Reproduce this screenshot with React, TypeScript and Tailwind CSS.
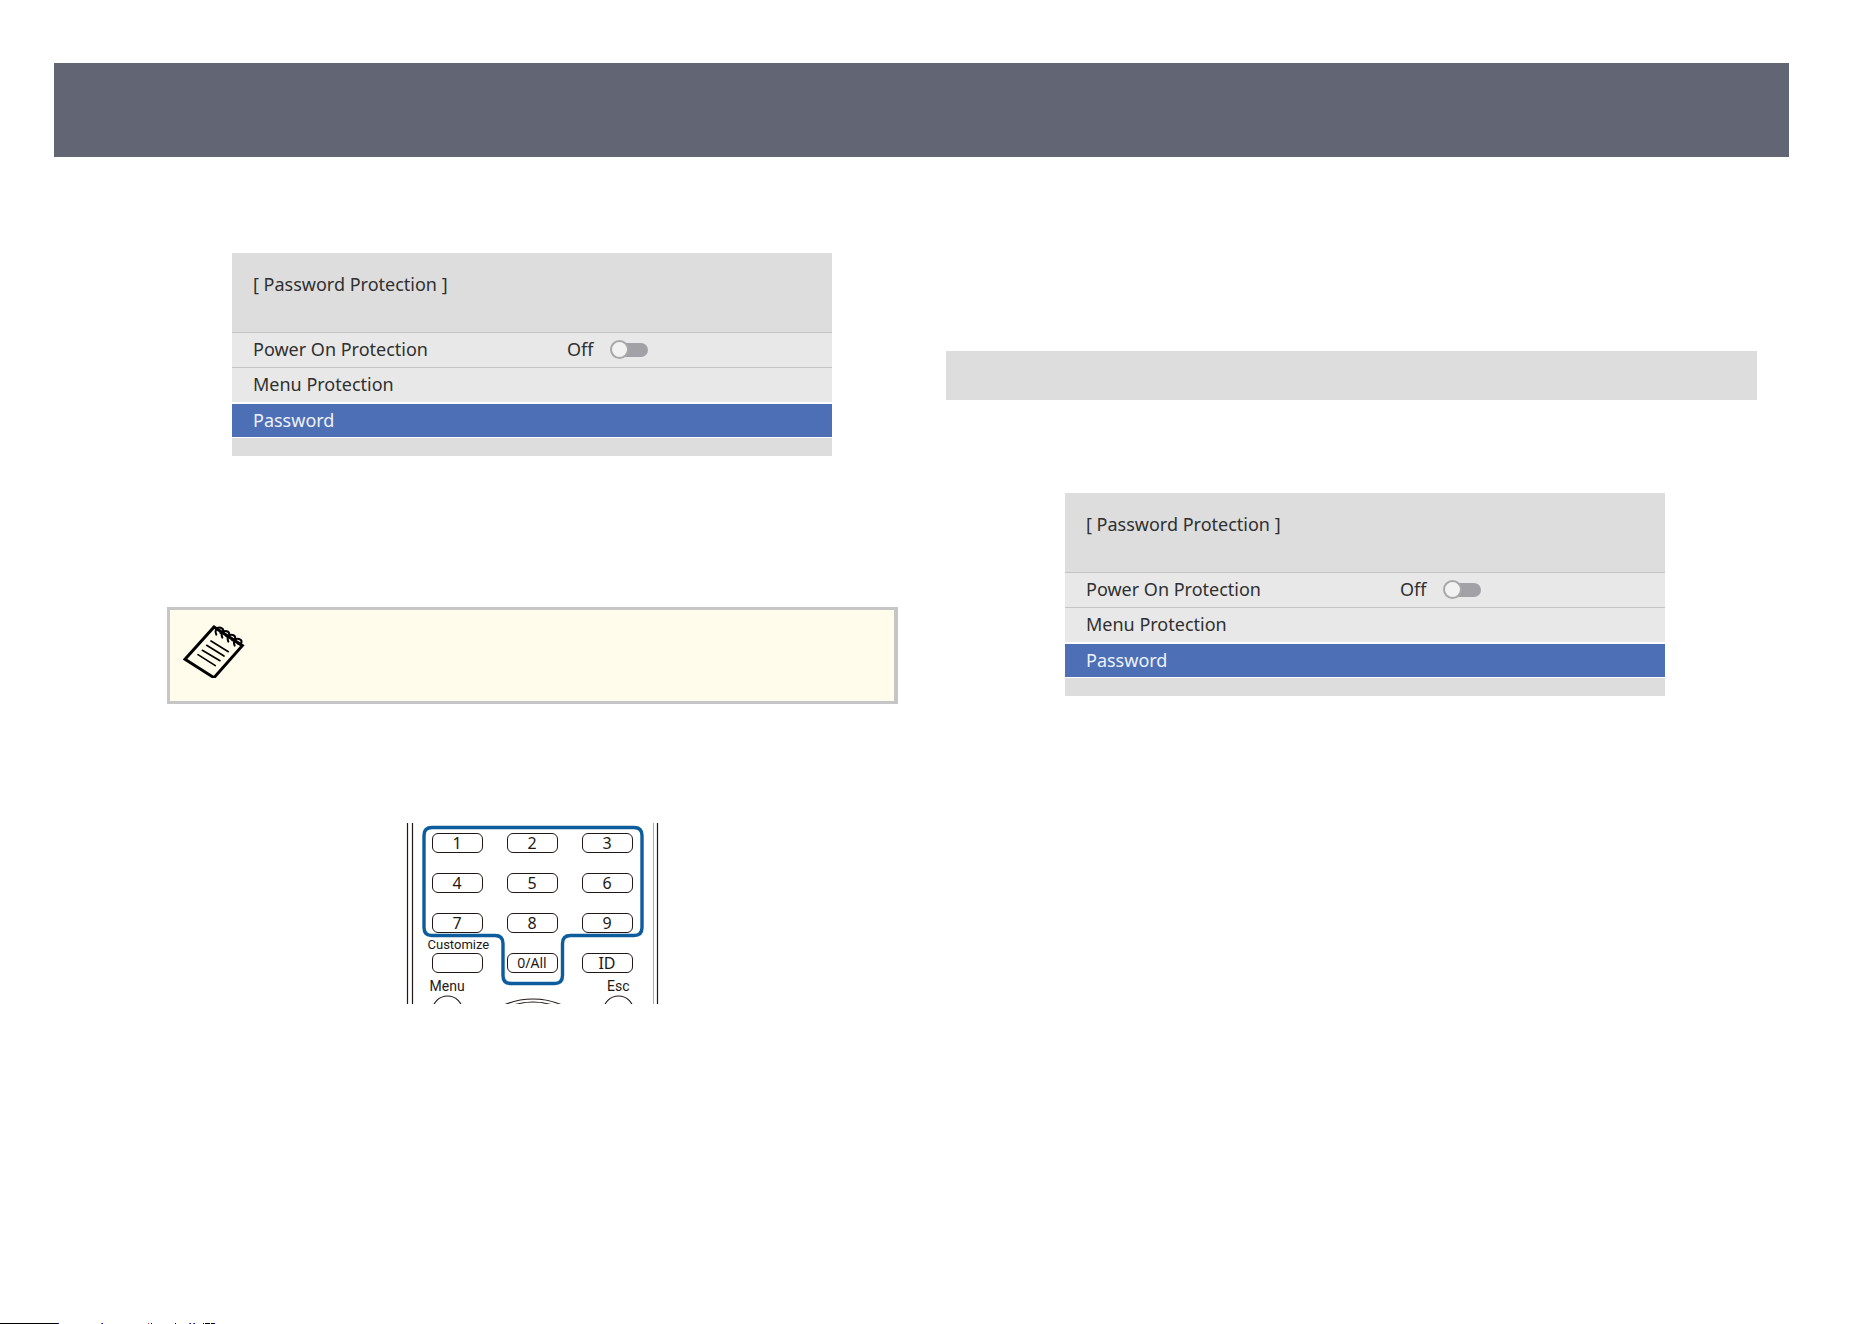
import React, { useState } from "react";
import clsx from "clsx";

const keys = ["1", "2", "3", "4", "5", "6", "7", "8", "9"];

function ProtectionMenu({ id, className }: { id: string; className?: string }) {
  const [powerOn, setPowerOn] = useState(false);

  return (
    <section className={clsx("w-full max-w-[600px] text-lg text-[#303030]", className)}>
      <h2 className="h-[79px] bg-[#dddddd] px-[21px] pt-4 leading-[30px]">[ Password Protection ]</h2>
      <div className="flex h-[35px] items-center border-t border-[#c4c4c4] bg-[#e8e8e8] pb-0.5 pl-[21px] leading-8">
        <label htmlFor={id} className="w-[314px]">
          Power On Protection
        </label>
        <span className="w-[43px]">{powerOn ? "On" : "Off"}</span>
        <input
          id={id}
          type="checkbox"
          role="switch"
          checked={powerOn}
          onChange={(e) => setPowerOn(e.target.checked)}
          className="relative h-[19px] w-[38px] appearance-none before:absolute before:top-[3px] before:left-1 before:h-3.5 before:w-[34px] before:rounded-full before:bg-[#a2a2a6] after:absolute after:top-0 after:left-0 after:size-[19px] after:rounded-full after:border-2 after:border-[#a8a8a8] after:bg-[#f2f2f2] checked:after:left-[19px]"
        />
      </div>
      <button className="block h-[35px] w-full border-t border-[#c4c4c4] bg-[#e8e8e8] pb-0.5 pl-[21px] text-left leading-8">
        Menu Protection
      </button>
      <button className="mt-0.5 block h-[33px] w-full bg-[#4d6fb5] pb-px pl-[21px] text-left leading-8 text-[#eef2fa]">
        Password
      </button>
      <div className="mt-px h-[18px] bg-[#dddddd]" />
    </section>
  );
}

function NotepadIcon() {
  return (
    <svg className="h-[56px] w-[62px]" viewBox="0 0 186 168" fill="none" stroke="#000" aria-hidden="true">
      <path d="M6 112 93 15 178 71 93 167Z" strokeWidth="9" />
      <path d="M84 57 136 89M71 70 123 102M58 85 111 116M45 98 97 131" strokeWidth="5" strokeLinecap="round" />
      <path
        d="M100 38C94 23 102 14 113 17S123 35 112 33M118 47C112 33 120 25 131 28S141 45 130 43M136 59C130 45 138 36 149 39S159 56 148 55M155 71C149 57 157 48 168 51S178 68 166 66"
        strokeWidth="6"
        strokeLinecap="round"
      />
    </svg>
  );
}

function Key({ children, label }: { children?: React.ReactNode; label?: string }) {
  return (
    <button
      aria-label={label}
      className="flex h-5 w-[51px] items-center justify-center rounded-[6px] border border-[#231815] pb-px text-base leading-4 text-[#231815]"
    >
      {children}
    </button>
  );
}

function RemoteKeypad() {
  return (
    <div className="relative mx-auto h-[181px] w-[254px] overflow-hidden">
      {/* body edges, highlighted number area and the tops of the round keys */}
      <svg className="absolute inset-0" width="254" height="181" viewBox="0 0 254 181" fill="none" aria-hidden="true">
        <path d="M1.5 0V181M6.5 0V181M251.5 0V181" stroke="#231815" strokeWidth="1.2" />
        <path d="M247.5 0V181" stroke="#aaa" />
        <path
          d="M26 4.500H228Q236 4.500 236 12.500V104.500Q236 112.500 228 112.500H164.500Q156.500 112.500 156.500 120.500V152.500Q156.500 160.500 148.500 160.500H105Q97 160.500 97 152.500V120.500Q97 112.500 89 112.500H26Q18 112.500 18 104.500V12.500Q18 4.500 26 4.500Z"
          stroke="#0d5c9d"
          strokeWidth="3.400"
        />
        <g stroke="#231815" strokeWidth="1.2">
          <circle cx="41.500" cy="188" r="15" />
          <circle cx="212.500" cy="188" r="15" />
          <circle cx="127" cy="246" r="70" />
          <circle cx="127" cy="239" r="60" />
        </g>
      </svg>
      <div className="relative pt-[10px] pl-[26px]">
        <div className="grid w-fit grid-cols-3 gap-x-6 gap-y-5">
          {keys.map((k) => (
            <Key key={k}>{k}</Key>
          ))}
        </div>
        <p className="-ml-1 h-5 pt-1 font-[Roboto,sans-serif] text-[13px] leading-4 text-[#231815]">
          Customize
        </p>
        <div className="flex gap-6">
          <Key label="Customize" />
          <Key>
            <span className="text-sm leading-4">0/All</span>
          </Key>
          <Key>ID</Key>
        </div>
        <div className="mr-[30px] -ml-0.5 flex justify-between pt-[3px] font-[Roboto,sans-serif] text-sm leading-5 text-[#231815]">
          <span>Menu</span>
          <span>Esc</span>
        </div>
      </div>
    </div>
  );
}

export default function App() {
  return (
    <div className="flex min-h-screen flex-col bg-white pt-[63px] font-['Noto_Sans',sans-serif]">
      <header className="mr-[83px] ml-[54px] h-[94px] bg-[#626674]" />
      <main className="grid grid-cols-[731fr_811fr] gap-12 pr-[115px] pl-[167px]">
        <div className="pt-24">
          <ProtectionMenu id="power-on-1" className="ml-[65px]" />
          <aside className="mt-[151px] mb-[119px] h-[97px] border-3 border-r-4 border-[#c6c6c6] bg-[#fffceb] pt-3 pl-[13px]">
            <NotepadIcon />
          </aside>
          <RemoteKeypad />
        </div>
        <div className="pt-[194px]">
          <div className="h-[49px] bg-[#dddddd]" />
          <ProtectionMenu id="power-on-2" className="mt-[93px] ml-[119px]" />
        </div>
      </main>
      <footer className="mt-auto">
        <svg className="block" width="216" height="1" viewBox="0 0 216 1" shapeRendering="crispEdges" aria-hidden="true">
          <path d="M0 0H59V1H0ZM151 0h1v1h-1ZM175 0h1v1h-1ZM203 0h1v1h-1ZM205 0h5v1h-5ZM211 0h3v1h-3Z" fill="#000" />
          <path d="M101 0h1v1h-1ZM148 0h1v1h-1ZM189 0h1v1h-1ZM193 0h1v1h-1Z" fill="#e04030" />
          <path d="M58 0h1v1h-1ZM102 0h1v1h-1ZM190 0h1v1h-1ZM194 0h1v1h-1ZM214 0h1v1h-1Z" fill="#1010c0" />
        </svg>
      </footer>
    </div>
  );
}
